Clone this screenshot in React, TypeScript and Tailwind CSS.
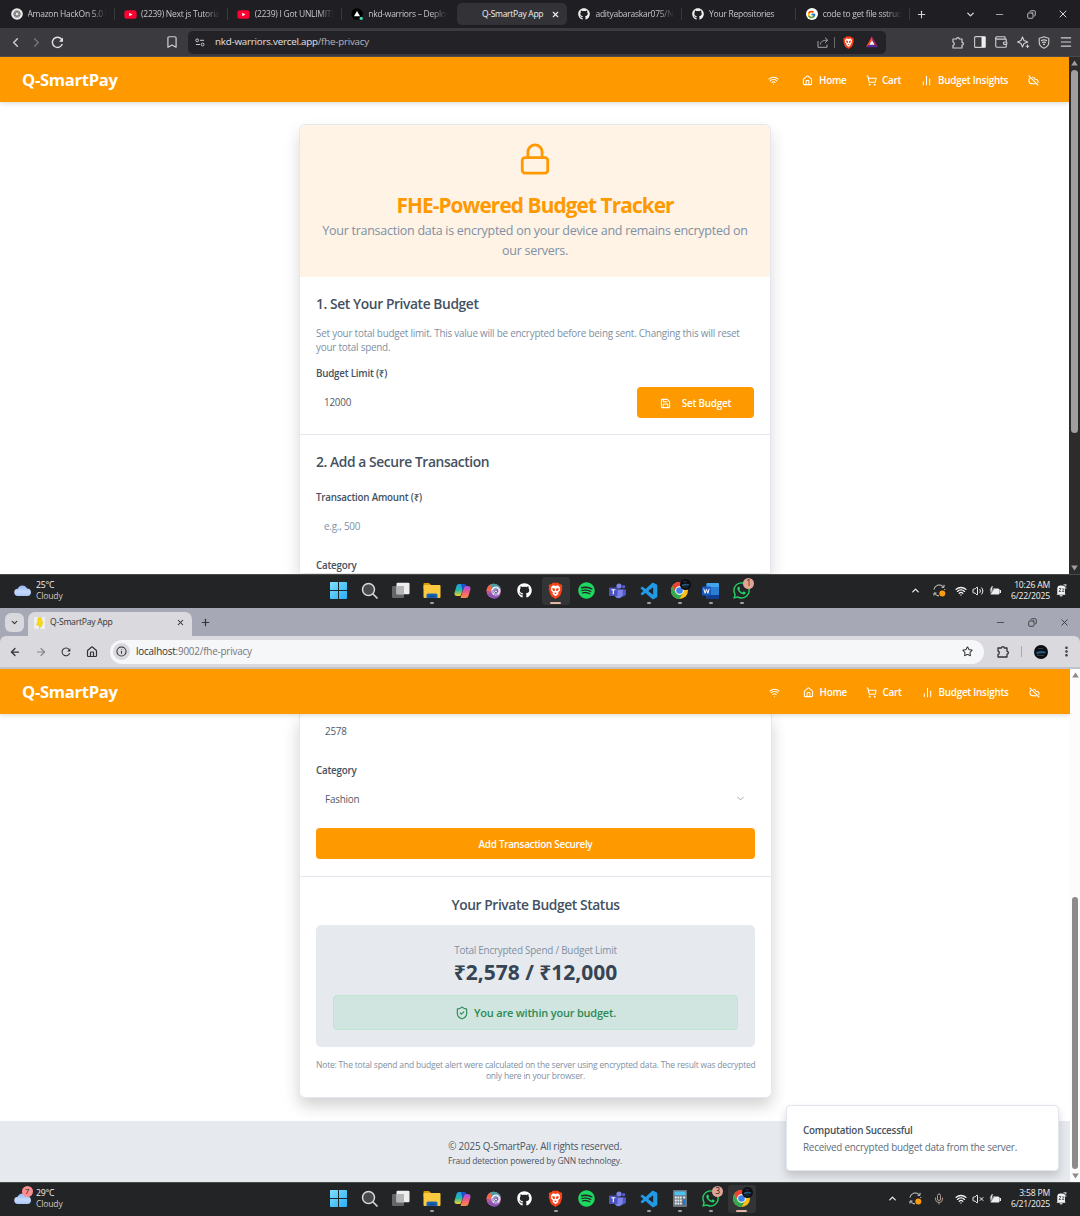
import React from 'react';
import {
  Lock, Wifi, House, ShoppingCart, ChartNoAxesColumn, CloudOff, Save, ChevronDown, ShieldCheck,
  X, Plus, Minus, Copy, Bookmark, Menu, Star, EllipsisVertical, ArrowLeft, ArrowRight,
  ChevronLeft, ChevronRight, ChevronUp, Volume2, VolumeX, Info, Mic, Wallet,
} from 'lucide-react';
import { FaGithub, FaYoutube, FaSpotify, FaWhatsapp } from 'react-icons/fa';
import { FcGoogle } from 'react-icons/fc';
import { BiLogoVisualStudio } from 'react-icons/bi';

/* ---------- Brand and system icons ---------- */

function BraveIcon({ size }: { size: number }) {
  return (
    <svg width={size} height={size} viewBox="0 0 24 24">
      <path fill="#fb4218" d="M8 1h8l2.200 2.400 2-.3 1.500 2.600-.8 2 .7 2.200-2.500 8.300-1.800 2.300L12 24l-5.300-3.500L4.900 18.200 2.400 9.900l.7-2.200-.8-2 1.500-2.600 2 .3z" />
      <path fill="#fff" d="M12 5.500l3.600-.8 3 3.300-.6 1.600.6 1.800-3 3.400.6 2L12 20l-4.200-3.200.6-2-3-3.400.6-1.800L5.400 8l3-3.300z" />
      <path fill="#fb4a22" d="M8 8.500l3 .8.3 3-2 .7-2-2.800zM16 8.500l-3 .8-.3 3 2 .7 2-2.800zM10 15.500l2-.8 2 .8-2 1.700z" />
    </svg>
  );
}

function ChromeIcon({ size }: { size: number }) {
  return (
    <svg width={size} height={size} viewBox="0 0 24 24">
      <circle cx="12" cy="12" r="12" fill="#fbc116" />
      <path fill="#ea4335" d="M1.600 6A12 12 0 0 1 22.400 6H12a6 6 0 0 0-5.200 9z" />
      <path fill="#34a853" d="M1.600 6A12 12 0 0 0 12 24l5.200-9a6 6 0 0 1-10.400 0z" />
      <circle cx="12" cy="12" r="6" fill="#fff" />
      <circle cx="12" cy="12" r="4.700" fill="#3b82f0" />
    </svg>
  );
}

function WindowsIcon() {
  return (
    <svg width="17" height="17" viewBox="0 0 17 17">
      <defs>
        <linearGradient id="win" x1="0" y1="0" x2="1" y2="1" gradientUnits="objectBoundingBox">
          <stop offset="0" stopColor="#7fe0ff" />
          <stop offset="1" stopColor="#28aef6" />
        </linearGradient>
      </defs>
      <path fill="url(#win)" d="M0 .8A.8.8 0 0 1 .8 0H8v8H0zM9 0h7.200a.8.8 0 0 1 .8.8V8H9zM0 9h8v8H.8a.8.8 0 0 1-.8-.8zM9 9h8v7.200a.8.8 0 0 1-.8.8H9z" />
    </svg>
  );
}

function SearchIcon() {
  return (
    <svg width="17" height="17" viewBox="0 0 17 17" fill="none">
      <circle cx="7.500" cy="7.500" r="6" fill="#4a4a4a" stroke="#d8d8d8" strokeWidth="1.500" />
      <path d="M12 12l4 4" stroke="#d8d8d8" strokeWidth="1.700" strokeLinecap="round" />
    </svg>
  );
}

function TaskViewIcon() {
  return (
    <svg width="18" height="17" viewBox="0 0 18 17">
      <rect x="0" y="4" width="12" height="12" rx="1" fill="#666" />
      <rect x="4.500" y="0.800" width="13" height="11.500" rx="1" fill="#eee" />
      <path d="M4.500 4H12v8.300H4.500z" fill="#b5b5b5" />
    </svg>
  );
}

function FolderIcon() {
  return (
    <svg width="18" height="17" viewBox="0 0 18 17">
      <path fill="#d99a0c" d="M.5 2A1 1 0 0 1 1.500 1H6l2 2h-1v4H.5z" />
      <rect x=".5" y="3" width="17" height="13" rx="1" fill="#fcca3e" />
      <path fill="#1565b8" d="M3.500 16v-3A1.500 1.500 0 0 1 5 11.500h8A1.500 1.500 0 0 1 14.500 13v3z" />
      <path fill="#0d4a91" d="M6 13.500h6V15H6z" />
    </svg>
  );
}

function CopilotIcon() {
  return (
    <svg width="17" height="16" viewBox="0 0 17 16">
      <defs>
        <linearGradient id="cpA" x1="0" y1="0" x2="0" y2="1">
          <stop offset="0" stopColor="#1d9bf0" />
          <stop offset=".5" stopColor="#25b8a0" />
          <stop offset="1" stopColor="#f5d328" />
        </linearGradient>
        <linearGradient id="cpB" x1="0" y1="0" x2="0" y2="1">
          <stop offset="0" stopColor="#a04be8" />
          <stop offset=".5" stopColor="#ee5a86" />
          <stop offset="1" stopColor="#f9903c" />
        </linearGradient>
      </defs>
      <path fill="url(#cpA)" d="M5 1h5.500L7.200 11.500C6.900 12.500 6.200 13 5.200 13H3C1 13 0 11.700.6 9.500L2.500 3C3 1.700 3.700 1 5 1z" />
      <path fill="url(#cpB)" d="M12 15H6.500L9.800 4.500C10.100 3.500 10.800 3 11.800 3H14c2 0 3 1.300 2.400 3.500L14.500 13c-.5 1.300-1.200 2-2.500 2z" />
      <path fill="#1a50c8" d="M7 1h3.500c1 0 1.500.7 1.800 2-1.500 0-2.200.6-2.500 1.500L8.700 8z" />
    </svg>
  );
}

function ColorRingIcon() {
  return (
    <svg width="16" height="16" viewBox="0 0 16 16">
      <circle cx="7.800" cy="8" r="7.300" fill="#c2559e" />
      <path d="M.5 8A7.300 7.300 0 0 1 7.800.7V8z" fill="#f26a4b" />
      <path d="M4 1.800A7.300 7.300 0 0 1 15 7L8 8z" fill="#4a9da0" />
      <path d="M1.500 11.500L8 8l6 4.500a7.300 7.300 0 0 1-9 2.300z" fill="#8d55b4" />
      <circle cx="9.800" cy="8" r="4.500" fill="#ebe8f5" />
      <path d="M7.200 10.200A3 3 0 0 1 11.800 6.500V9.500M11.500 8A1.500 1.300 0 1 1 10 7Q11.500 7 11.500 8M8 11h3.500" fill="none" stroke="#544a9c" strokeWidth=".9" />
    </svg>
  );
}

function TeamsIcon() {
  return (
    <svg width="17" height="16" viewBox="0 0 17 16">
      <circle cx="10" cy="3" r="2.600" fill="#7b83eb" />
      <circle cx="14.600" cy="3.800" r="1.800" fill="#5059c9" />
      <path fill="#5059c9" d="M12 6.500h5v4.300a2.900 2.900 0 0 1-4 2.500z" />
      <path fill="#7b83eb" d="M5.500 6.500h8.300v4.800a4.200 4.200 0 0 1-8.300.5z" />
      <rect x="0" y="4.500" width="8.500" height="8.500" rx=".8" fill="#4b53bc" />
      <path d="M2.300 6.800h4M4.300 6.800v4.400" stroke="#fff" strokeWidth="1.100" />
    </svg>
  );
}

function WordIcon() {
  return (
    <svg width="17" height="16" viewBox="0 0 17 16">
      <rect x="4.500" y="0" width="12.500" height="16" rx="1" fill="#2b7cd3" />
      <path fill="#41a5ee" d="M4.500 1a1 1 0 0 1 1-1H16a1 1 0 0 1 1 1v3H4.500z" />
      <path fill="#103f91" d="M4.500 12H17v3a1 1 0 0 1-1 1H5.500a1 1 0 0 1-1-1z" />
      <rect x="0" y="3.500" width="9" height="9" rx=".8" fill="#185abd" />
      <path d="M1.800 5.700l1.300 4.600 1.400-4 1.400 4 1.300-4.600" stroke="#fff" strokeWidth="1" fill="none" />
    </svg>
  );
}

function CalculatorIcon() {
  return (
    <svg width="14" height="17" viewBox="0 0 14 17">
      <rect width="14" height="17" rx="1" fill="#6d757c" />
      <rect x="1.500" y="1.500" width="11" height="3.800" fill="#4cc4f2" />
      <path d="M1.800 7.500h7M1.800 10.500h7M1.800 13.500h7" stroke="#e9eef2" strokeWidth="2" strokeDasharray="2 .6" />
      <path d="M11.200 6.500v2" stroke="#e9eef2" strokeWidth="2" />
      <path d="M11.200 9.500v5" stroke="#1976d2" strokeWidth="2" />
    </svg>
  );
}

function CloudIcon() {
  return (
    <svg width="18" height="13" viewBox="0 0 18 13">
      <defs>
        <linearGradient id="cloud" x1="0" y1="0" x2="0" y2="1">
          <stop offset="0" stopColor="#8fb4ef" />
          <stop offset=".6" stopColor="#c6dafb" />
          <stop offset="1" stopColor="#a9c6f6" />
        </linearGradient>
      </defs>
      <path fill="url(#cloud)" d="M4 12a3.600 3.600 0 0 1-.3-7.200A5 5 0 0 1 13 4.500 3.800 3.800 0 0 1 14 12z" />
    </svg>
  );
}

function SyncIcon() {
  return (
    <svg width="13" height="13" viewBox="0 0 13 13" fill="none" stroke="#cfcfcf" strokeWidth="1">
      <path d="M1 5.500A5.300 5.300 0 0 1 10.500 3M11 .8V3.300H8.500M1 11.700V9h2.500M1.500 9A5.300 5.300 0 0 0 6 12M11.800 5v1" />
      <circle cx="9.300" cy="9.500" r="3" fill="#ff9b0f" stroke="none" />
    </svg>
  );
}

function BatteryIcon() {
  return (
    <svg width="12" height="10" viewBox="0 0 12 10">
      <rect x="1" y="2.500" width="9.600" height="6" rx="1.500" fill="#eee" />
      <rect x="10.800" y="4" width="1.200" height="3" fill="#eee" />
      <path d="M2.500 0L.4 4.200H2L1.300 8 4.500 3.300H3L4.500 0z" fill="#eee" stroke="#222" strokeWidth=".6" />
    </svg>
  );
}

function BellIcon() {
  return (
    <svg width="11" height="13" viewBox="0 0 11 13">
      <path d="M1.300 9.800V4.500A3 3 0 0 1 4.300 1.500H6A3 3 0 0 1 9 4.500v5.300l.5.900h-9zM3.500 11.300h3.300a1.700 1.700 0 0 1-3.300 0z" fill="#f2f2f2" />
      <path d="M3 4.500h2L3 7.500h2M6.200 5h2L6.200 7.500h2" stroke="#444" strokeWidth=".8" fill="none" />
      <path d="M7.500.8h2.800L7.800 4h2.700" stroke="#f2f2f2" strokeWidth=".9" fill="none" />
    </svg>
  );
}

function SitesIcon() {
  return (
    <svg width="10" height="9" viewBox="0 0 10 9" fill="none" stroke="#ccc" strokeWidth="1">
      <circle cx="2.200" cy="2.300" r="1.400" />
      <circle cx="7.600" cy="6.500" r="1.400" />
      <path d="M5 2.300h4M1 6.500h4" />
    </svg>
  );
}

function ReloadIcon({ color, size = 13 }: { color: string; size?: number }) {
  return (
    <svg width={size} height={size} viewBox="0 0 13 13" fill="none" stroke={color} strokeWidth="1.400">
      <path d="M11.300 8A5.100 5.100 0 1 1 10.500 3.200L11.500 5" />
      <path d="M12 1.500V5.700H8z" fill={color} stroke="none" />
    </svg>
  );
}

function ShareIcon() {
  return (
    <svg width="12" height="11" viewBox="0 0 12 11" fill="none" stroke="#a5a5a8" strokeWidth="1">
      <path d="M1 4v6.300h9V7.500M3.300 7.500C3.600 4.500 6 3.200 10.500 3.200M8 .6l2.700 2.600L8 5.800" />
    </svg>
  );
}

function TriangleIcon() {
  return (
    <svg width="12" height="12" viewBox="0 0 12 12">
      <path d="M6 .3L6 4.500 3.500 9 0 11z" fill="#ff4724" />
      <path d="M6 .3L12 11 8.500 9 6 4.500z" fill="#9e1f63" />
      <path d="M0 11.200h12L8.500 8.700h-5z" fill="#5a2a9c" />
      <path d="M6 4.300L8.600 8.800H3.400z" fill="#fff" />
    </svg>
  );
}

function SidebarIcon() {
  return (
    <svg width="12" height="12" viewBox="0 0 12 12">
      <rect x=".6" y=".6" width="10.800" height="10.800" rx="1" fill="none" stroke="#ccc" strokeWidth="1.100" />
      <path d="M7.500 1H11v10H7.500z" fill="#eee" />
    </svg>
  );
}

function LeoIcon() {
  return (
    <svg width="13" height="13" viewBox="0 0 13 13" fill="none" stroke="#d0d0d0" strokeWidth="1.100" strokeLinejoin="round">
      <path d="M5.500 1L7 4.500 10.800 6 7 7.500 5.500 11 4 7.500.6 6 4 4.500z" />
      <path d="M10.500 8.500v3.500M8.800 10.200h3.500" />
    </svg>
  );
}

function VpnIcon() {
  return (
    <svg width="12" height="13" viewBox="0 0 12 13" fill="none" stroke="#d0d0d0" strokeWidth="1.100">
      <path d="M6 .8l4.800 1.500v4.200c0 2.700-2 4.500-4.800 5.700C3.200 11 1.200 9.200 1.200 6.500V2.300z" />
      <path d="M3 4.700q3-1.700 6 0M4 6.600q2-1 4 0M5 8.400h2" />
    </svg>
  );
}

function ExtensionIcon({ color, weight }: { color: string; weight: number }) {
  return (
    <svg width="13" height="13" viewBox="0 0 13 13" fill="none" stroke={color} strokeWidth={weight} strokeLinejoin="round">
      <path d="M1 3h3.500a1.400 1.400 0 0 1 2.800 0H10v3.300a1.400 1.400 0 0 1 0 2.800V12H1V9.300a1.700 1.700 0 0 0 0-3.300z" />
    </svg>
  );
}

function RestoreIcon() {
  return <Copy size={9} strokeWidth={2.300} className="-scale-x-100" />;
}

function LightningIcon() {
  return (
    <svg width="11" height="12" viewBox="0 0 11 12">
      <rect width="11" height="12" fill="#eeeeea" />
      <path d="M4 .8h3.500L7.200 4l1.600.5L8 8l-2.600 3.500.3-3L2.600 8l1.200-3.500z" fill="#f8d90f" stroke="#d9b800" strokeWidth=".4" />
    </svg>
  );
}

function VercelIcon() {
  return (
    <svg width="12" height="12" viewBox="0 0 12 12">
      <circle cx="6" cy="6" r="5.700" fill="#000" />
      <path d="M6 3l3 5.200H3z" fill="#fff" />
      <circle cx="10.200" cy="10.300" r="1.600" fill="#45dcc0" />
    </svg>
  );
}

function OpenAiIcon() {
  return (
    <svg width="12" height="12" viewBox="0 0 12 12">
      <circle cx="6" cy="6" r="5.800" fill="#e9e9e9" />
      <g fill="none" stroke="#666" strokeWidth=".7">
        <ellipse cx="6" cy="6" rx="3.600" ry="1.900" />
        <ellipse cx="6" cy="6" rx="3.600" ry="1.900" transform="rotate(60 6 6)" />
        <ellipse cx="6" cy="6" rx="3.600" ry="1.900" transform="rotate(120 6 6)" />
      </g>
    </svg>
  );
}

function Avatar({ className }: { className: string }) {
  return (
    <svg className={className} viewBox="0 0 14 14">
      <circle cx="7" cy="7" r="7" fill="#0b0f15" />
      <path d="M2 7.500q5-2.500 10-.5l-1 1.500q-4-.8-8 .8z" fill="#24587f" />
      <path d="M4 3.500h5M3 10.500h7" stroke="#333b45" strokeWidth="1" />
    </svg>
  );
}

function Caret({ up, color }: { up?: boolean; color: string }) {
  return (
    <svg width="7" height="6" viewBox="0 0 7 6" className="shrink-0">
      <path d={up ? 'M3.500 .5L6.800 5.500H.2z' : 'M3.500 5.500L6.800 .5H.2z'} fill={color} />
    </svg>
  );
}

/* ---------- Brave window chrome ---------- */

type TabInfo = { icon: React.ReactNode; label: string; active?: boolean; divider?: boolean };

const github = <FaGithub size={12} color="#f0f0f0" />;
const youtube = (
  <span className="flex items-center justify-center">
    <FaYoutube size={13} color="#ff0033" className="bg-[radial-gradient(circle,white_25%,transparent_26%)]" />
  </span>
);

const tabs: TabInfo[] = [
  { icon: <OpenAiIcon />, label: 'Amazon HackOn 5.0 I', divider: true },
  { icon: youtube, label: '(2239) Next js Tutorial', divider: true },
  { icon: youtube, label: '(2239) I Got UNLIMITE', divider: true },
  { icon: <VercelIcon />, label: 'nkd-warriors – Deploy' },
  { icon: <span />, label: 'Q-SmartPay App', active: true },
  { icon: github, label: 'adityabaraskar075/NK', divider: true },
  { icon: github, label: 'Your Repositories', divider: true },
  { icon: <FcGoogle size={9} />, label: 'code to get file sstruct', divider: true },
];

function BraveTab({ tab }: { tab: TabInfo }) {
  return (
    <div className="flex h-[28px] w-[113.600px] shrink-0 items-center">
      <div className={`flex h-[22px] w-[110px] items-center rounded-[5px] pl-[8px] ${tab.active ? 'bg-[#333337]' : ''}`}>
        <span className={`flex h-[12px] w-[12px] shrink-0 items-center justify-center ${tab.label.startsWith('code') ? 'rounded-full bg-white' : ''}`}>
          {tab.icon}
        </span>
        <span
          className={`ml-[5px] shrink-0 overflow-hidden whitespace-nowrap text-[8.500px] tracking-[-0.270px] ${
            tab.active ? 'w-[69px] text-[#f0f0f0]' : 'w-[79px] text-[#c6c6ca] [mask-image:linear-gradient(to_right,black_80%,transparent)]'
          }`}
        >
          {tab.label}
        </span>
        {tab.active && <X size={9} strokeWidth={3} color="#f0f0f0" />}
      </div>
      {tab.divider && <span className="ml-[1px] h-[12px] w-px bg-[#3a3a3e]" />}
    </div>
  );
}

function BraveChrome() {
  return (
    <div className="h-[57px] shrink-0">
      <div className="flex h-[28px] items-center bg-[#1f1f23] pl-[2.500px]">
        {tabs.map((t, i) => (
          <BraveTab key={i} tab={t} />
        ))}
        <div className="flex flex-1 items-center pl-[5px] text-[#d5d5d8]">
          <Plus size={11} strokeWidth={2.400} />
          <ChevronDown size={11} strokeWidth={3} className="mr-[18px] ml-[38px]" />
          <Minus size={11} strokeWidth={1.600} className="mr-[22px]" />
          <RestoreIcon />
          <X size={12} strokeWidth={2} className="ml-[21px]" />
        </div>
      </div>
      <div className="flex h-[29px] items-center border-b border-[#4a4a4a] bg-[#3b3a3f] text-[#d0d0d2]">
        <ChevronLeft size={15} strokeWidth={2.200} className="ml-[8px]" />
        <ChevronRight size={15} strokeWidth={2} color="#77777c" className="ml-[6px]" />
        <span className="ml-[7px]">
          <ReloadIcon color="#e2e2e4" />
        </span>
        <Bookmark size={14} strokeWidth={2.100} className="ml-[101px]" />
        <div className="ml-[9px] flex h-[23px] w-[698px] items-center rounded-[5px] bg-[#232227] pl-[7px] text-[9.800px] tracking-[-0.230px]">
          <SitesIcon />
          <span className="ml-[10px] text-[#e2e2e4]">
            nkd-warriors.vercel.app<span className="text-[#b6b6ba]">/fhe-privacy</span>
          </span>
          <span className="ml-auto">
            <ShareIcon />
          </span>
          <span className="ml-[5px] h-[11px] w-px bg-[#6a6a6e]" />
          <span className="ml-[7px]">
            <BraveIcon size={13} />
          </span>
          <span className="mr-[8px] ml-[11px]">
            <TriangleIcon />
          </span>
        </div>
        <div className="ml-[66px] flex items-center gap-[8.500px]">
          <ExtensionIcon color="#d0d0d2" weight={1.200} />
          <SidebarIcon />
          <Wallet size={14} strokeWidth={1.900} />
          <LeoIcon />
          <VpnIcon />
          <Menu size={14} strokeWidth={1.900} />
        </div>
      </div>
    </div>
  );
}

/* ---------- Chrome window chrome ---------- */

function ChromeChrome() {
  return (
    <div className="h-[61px] shrink-0 bg-[#a6a9b5]">
      <div className="flex h-[28px] items-center text-[#333]">
        <div className="ml-[5px] flex h-[19px] w-[19px] items-center justify-center rounded-[6px] bg-[#d8d8dd]">
          <ChevronDown size={9} strokeWidth={3} />
        </div>
        <div className="ml-[4px] flex h-[24px] w-[164px] items-center self-end rounded-t-[7px] bg-[#d9d9de] pb-[3px] pl-[6px]">
          <LightningIcon />
          <span className="ml-[5px] text-[8.600px] tracking-[-0.250px] text-[#333]">Q-SmartPay App</span>
          <X size={9} strokeWidth={2.700} className="mr-[7px] ml-auto" />
        </div>
        <Plus size={11} strokeWidth={2.600} className="ml-[8px]" />
        <div className="mr-[10px] ml-auto flex items-center">
          <Minus size={11} strokeWidth={1.600} className="mr-[22px]" />
          <RestoreIcon />
          <X size={11} strokeWidth={1.900} className="ml-[22px]" />
        </div>
      </div>
      <div className="flex h-[33px] items-center rounded-t-[6px] border-b-2 border-[#c2c3ca] bg-[#d9d9de] text-[#333]">
        <ArrowLeft size={12} strokeWidth={2.500} className="ml-[9px]" />
        <ArrowRight size={12} strokeWidth={2.200} color="#858589" className="ml-[14px]" />
        <span className="ml-[14px]">
          <ReloadIcon color="#333" size={10} />
        </span>
        <House size={12} strokeWidth={2.400} className="ml-[15px]" />
        <div className="ml-[12px] flex h-[24px] w-[874px] items-center rounded-full bg-[#f6f7f9] pl-[3px]">
          <span className="flex h-[17px] w-[17px] items-center justify-center rounded-full bg-[#d9d9de]">
            <Info size={11} strokeWidth={2.200} />
          </span>
          <span className="ml-[6px] text-[9.900px] tracking-[-0.200px] text-[#333]">
            localhost<span className="text-[#757579]">:9002/fhe-privacy</span>
          </span>
          <Star size={11} strokeWidth={2.200} className="mr-[11px] ml-auto" />
        </div>
        <div className="ml-[13px] flex items-center">
          <ExtensionIcon color="#333" weight={1.300} />
          <span className="ml-[11px] h-[11px] w-px bg-[#aaa]" />
          <Avatar className="ml-[12px] h-[14px] w-[14px]" />
          <EllipsisVertical size={13} strokeWidth={2.800} className="ml-[12px]" />
        </div>
      </div>
    </div>
  );
}

/* ---------- Taskbar ---------- */

type TaskIcon = { icon: React.ReactNode; dot?: boolean; active?: boolean; badge?: string };

const brave = <BraveIcon size={17} />;
const vscode = <BiLogoVisualStudio size={20} color="#2299e6" />;
const whatsapp = <FaWhatsapp size={19} color="#25d366" />;
const chrome = (
  <span className="relative">
    <ChromeIcon size={17} />
    <Avatar className="absolute -top-[3px] -right-[3px] h-[11px] w-[11px]" />
  </span>
);

const pinned: TaskIcon[] = [
  { icon: <WindowsIcon /> },
  { icon: <SearchIcon /> },
  { icon: <TaskViewIcon /> },
  { icon: <FolderIcon />, dot: true },
  { icon: <CopilotIcon /> },
  { icon: <ColorRingIcon /> },
  { icon: <FaGithub size={15} color="#fff" /> },
];

const topApps: TaskIcon[] = [
  ...pinned,
  { icon: brave, active: true },
  { icon: <FaSpotify size={17} color="#1ed760" /> },
  { icon: <TeamsIcon /> },
  { icon: vscode, dot: true },
  { icon: chrome, dot: true },
  { icon: <WordIcon />, dot: true },
  { icon: whatsapp, dot: true, badge: '1' },
];

const bottomApps: TaskIcon[] = [
  ...pinned,
  { icon: brave, dot: true },
  { icon: <FaSpotify size={17} color="#1ed760" /> },
  { icon: <TeamsIcon /> },
  { icon: vscode, dot: true },
  { icon: <CalculatorIcon />, dot: true },
  { icon: whatsapp, dot: true, badge: '3' },
  { icon: chrome, active: true },
];

function Taskbar(props: { apps: TaskIcon[]; temp: string; time: string; date: string; alert?: string; recording?: boolean }) {
  return (
    <div className="flex h-[34px] shrink-0 items-center border-t border-[#4a4a4a] bg-[#232425] pb-[1.500px] text-[8.600px] tracking-[-0.180px] text-[#f2f2f2]">
      <div className="relative ml-[13.500px] flex w-[309.500px] items-center">
        <CloudIcon />
        {props.alert && (
          <span className="absolute -top-[2px] left-[8px] flex h-[11px] w-[11px] items-center justify-center rounded-full bg-[#ff8f8f] text-[8px] text-[#222]">
            {props.alert}
          </span>
        )}
        <div className="ml-[4.500px] leading-[11px]">
          <div>{props.temp}</div>
          <div className="text-[#c9c9c9]">Cloudy</div>
        </div>
      </div>
      {props.apps.map((a, i) => (
        <div key={i} className="relative flex h-[33px] w-[31px] shrink-0 items-center justify-center">
          <div className={`flex h-[28px] w-[28px] items-center justify-center rounded-[3px] ${a.active ? 'bg-[#333435]' : ''}`}>{a.icon}</div>
          {a.dot && <span className="absolute bottom-[3px] h-[2px] w-[4px] rounded-full bg-[#a0a0a0]" />}
          {a.active && <span className="absolute bottom-[3px] h-[2px] w-[11px] rounded-full bg-[#e3b3a4]" />}
          {a.badge && (
            <span className="absolute top-[4px] right-[3px] flex h-[11px] w-[11px] items-center justify-center rounded-full bg-[#dfa698] text-[8.500px] text-[#222]">
              {a.badge}
            </span>
          )}
        </div>
      ))}
      <div className="mr-[13px] ml-auto flex items-center">
        <ChevronUp size={11} strokeWidth={2.700} className={props.recording ? 'mr-[11px]' : 'mr-[12px]'} />
        <SyncIcon />
        {props.recording && <Mic size={12} color="#b09a92" className="ml-[11px]" />}
        <Wifi size={12} strokeWidth={2.600} className={props.recording ? 'ml-[10px]' : 'ml-[9px]'} />
        {props.recording ? <VolumeX size={12} strokeWidth={2} className="ml-[5px]" /> : <Volume2 size={12} strokeWidth={2} className="ml-[5px]" />}
        <span className="ml-[5px]">
          <BatteryIcon />
        </span>
        <div className="ml-[9px] w-[40px] text-right leading-[11px] whitespace-nowrap">
          <div>{props.time}</div>
          <div>{props.date}</div>
        </div>
        <span className="ml-[6px]">
          <BellIcon />
        </span>
      </div>
    </div>
  );
}

/* ---------- Q-SmartPay page ---------- */

function AppHeader({ inset }: { inset: string }) {
  return (
    <header className={`relative z-10 flex h-[45px] shrink-0 items-center bg-[#ff9900] pt-[2px] pl-[22px] text-white shadow-[0_2px_4px_rgba(0,0,0,0.120)] ${inset}`}>
      <span className="text-[16.600px] font-bold tracking-[-0.300px]">Q-SmartPay</span>
      <nav className="ml-auto flex items-center text-[9.900px] font-semibold tracking-[-0.250px]">
        <Wifi size={11} strokeWidth={2.200} />
        <House size={11} strokeWidth={2.200} className="ml-[23px]" />
        <span className="ml-[6px] w-[28px]">Home</span>
        <ShoppingCart size={11} strokeWidth={2.200} className="ml-[18.500px]" />
        <span className="ml-[5.500px] w-[20px]">Cart</span>
        <ChartNoAxesColumn size={11} strokeWidth={2.200} className="ml-[19px]" />
        <span className="ml-[6px] w-[72px] whitespace-nowrap">Budget Insights</span>
        <CloudOff size={11} strokeWidth={2.200} className="ml-[18px]" />
      </nav>
    </header>
  );
}

function Label({ children, className }: { children: React.ReactNode; className: string }) {
  return <div className={`text-[9.800px] leading-[14px] font-semibold tracking-[-0.220px] text-[#465260] ${className}`}>{children}</div>;
}

function SectionTitle({ children }: { children: React.ReactNode }) {
  return <h2 className="text-[13.800px] leading-[20px] font-semibold tracking-[-0.400px] text-[#445160]">{children}</h2>;
}

function BudgetForm() {
  return (
    <div className="mt-[22px] ml-[299px] w-[472px] shrink-0 overflow-hidden rounded-t-[6px] border border-b-0 border-[#e4e8ee] bg-white shadow-[0_8px_16px_rgba(0,0,0,0.150)]">
      <div className="flex h-[152px] flex-col items-center bg-[#fff3e6] pt-[17px] text-center">
        <Lock size={34} strokeWidth={2} color="#ff9900" />
        <h1 className="mt-[16px] text-[20.800px] leading-[26px] font-bold tracking-[-0.900px] text-[#ff9900]">FHE-Powered Budget Tracker</h1>
        <p className="mt-[3px] text-[12.500px] leading-[20px] tracking-[-0.270px] text-[#8090a3]">
          Your transaction data is encrypted on your device and remains encrypted on
          <br />
          our servers.
        </p>
      </div>
      <section className="border-b border-[#e2e7ed] px-[16px] pt-[17px] pb-[16px]">
        <SectionTitle>1. Set Your Private Budget</SectionTitle>
        <p className="mt-[12px] text-[9.900px] leading-[14px] tracking-[-0.220px] whitespace-nowrap text-[#8090a3]">
          Set your total budget limit. This value will be encrypted before being sent. Changing this will reset
          <br />
          your total spend.
        </p>
        <Label className="mt-[13px]">Budget Limit (₹)</Label>
        <div className="mt-[6px] flex h-[31px] items-center justify-between pl-[8px]">
          <span className="text-[9.900px] tracking-[-0.220px] text-[#4f5b69]">12000</span>
          <button className="flex h-[31px] w-[117px] items-center justify-center rounded-[4px] bg-[#ff9900] pt-[1px] text-[9.900px] font-semibold tracking-[-0.220px] text-white">
            <Save size={11} strokeWidth={2.200} className="mr-[11px]" />
            Set Budget
          </button>
        </div>
      </section>
      <section className="px-[16px] pt-[17px]">
        <SectionTitle>2. Add a Secure Transaction</SectionTitle>
        <Label className="mt-[19px]">Transaction Amount (₹)</Label>
        <div className="mt-[7px] flex h-[28px] items-center pl-[8px] text-[9.900px] tracking-[-0.220px] text-[#8090a3]">e.g., 500</div>
        <Label className="mt-[19px]">Category</Label>
      </section>
    </div>
  );
}

function BudgetStatus() {
  return (
    <div className="ml-[299px] h-[384px] w-[473px] shrink-0 rounded-b-[6px] border border-t-0 border-[#e4e8ee] bg-white shadow-[0_8px_16px_rgba(0,0,0,0.180)]">
      <section className="h-[163px] border-b border-[#e2e7ed] px-[16px] pt-[3px]">
        <div className="flex h-[28px] items-center pl-[9px] text-[9.900px] tracking-[-0.220px] text-[#4f5b69]">2578</div>
        <Label className="mt-[19px]">Category</Label>
        <div className="mt-[7px] flex h-[28px] items-center justify-between pr-[9px] pl-[9px] text-[9.900px] tracking-[-0.220px] text-[#4f5b69]">
          Fashion
          <ChevronDown size={11} color="#98a0a9" className="-mt-[2px]" />
        </div>
        <button className="mt-[15px] flex h-[31px] w-full items-center justify-center rounded-[4px] bg-[#ff9900] pt-[2px] text-[9.900px] font-semibold tracking-[-0.280px] text-white">
          Add Transaction Securely
        </button>
      </section>
      <section className="px-[16px] pt-[18px] text-center">
        <SectionTitle>Your Private Budget Status</SectionTitle>
        <div className="mt-[10px] h-[122px] rounded-[5px] bg-[#e6e9ed] px-[17px] pt-[18px]">
          <div className="text-[9.900px] leading-[14px] tracking-[-0.220px] text-[#8090a3]">Total Encrypted Spend / Budget Limit</div>
          <div className="mt-[2px] text-[21px] leading-[26px] font-bold text-[#364454]">₹2,578 / ₹12,000</div>
          <div className="mt-[10px] flex h-[35px] items-center justify-center rounded-[4px] border border-[#c2e4d3] bg-[#d0e5df] pt-[1px] text-[11px] font-semibold tracking-[-0.200px] text-[#2c8a55]">
            <ShieldCheck size={14} className="mr-[5px]" />
            You are within your budget.
          </div>
        </div>
        <p className="mt-[12px] text-[8.500px] leading-[11.300px] tracking-[-0.190px] whitespace-nowrap text-[#8090a3]">
          Note: The total spend and budget alert were calculated on the server using encrypted data. The result was decrypted
          <br />
          only here in your browser.
        </p>
      </section>
    </div>
  );
}

export default function App() {
  return (
    <div className="h-[1216px] w-[1080px] overflow-hidden bg-white font-['Open_Sans','Noto_Sans',sans-serif]">
      <div className="flex h-[608px] flex-col">
        <BraveChrome />
        <div className="flex h-[517px] overflow-hidden">
          <main className="flex w-[1069px] flex-col overflow-hidden">
            <AppHeader inset="pr-[30px]" />
            <BudgetForm />
          </main>
          <div className="flex w-[11px] flex-col items-center bg-[#2c2c2c] py-[3px]">
            <Caret up color="#9f9f9f" />
            <div className="mt-[4px] h-[363px] w-[7px] rounded-full bg-[#9f9f9f]" />
            <div className="mt-auto">
              <Caret color="#9f9f9f" />
            </div>
          </div>
        </div>
        <Taskbar apps={topApps} temp="25°C" time="10:26 AM" date="6/22/2025" />
      </div>
      <div className="flex h-[608px] flex-col">
        <ChromeChrome />
        <div className="relative flex h-[513px] overflow-hidden">
          <main className="flex w-[1070px] flex-col overflow-hidden">
            <AppHeader inset="pr-[30.500px]" />
            <BudgetStatus />
            <footer className="relative mt-[23px] flex-1 bg-[#e6e9ed] pt-[18px] text-center text-[#4a5665]">
              <div className="text-[9.900px] leading-[14px] tracking-[-0.200px]">© 2025 Q-SmartPay. All rights reserved.</div>
              <div className="mt-[1px] text-[8.500px] leading-[13px] tracking-[-0.160px]">Fraud detection powered by GNN technology.</div>
            </footer>
          </main>
          <div className="flex w-[10px] flex-col items-center bg-[#fcfcfc] py-[3px]">
            <Caret up color="#8b8b8b" />
            <div className="mt-auto mb-[4px] h-[272px] w-[6px] rounded-full bg-[#8b8b8b]" />
            <Caret color="#8b8b8b" />
          </div>
          <div className="absolute right-[21px] bottom-[11px] z-20 h-[66px] w-[273px] rounded-[4px] border border-[#e2e7ed] bg-white pt-[17px] pl-[16px] text-[9.900px] leading-[15px] tracking-[-0.230px] shadow-[0_5px_9px_rgba(0,0,0,0.160)]">
            <div className="font-semibold text-[#465260]">Computation Successful</div>
            <div className="mt-[2px] text-[#606c79]">Received encrypted budget data from the server.</div>
          </div>
        </div>
        <Taskbar apps={bottomApps} temp="29°C" time="3:58 PM" date="6/21/2025" alert="7" recording />
      </div>
    </div>
  );
}
